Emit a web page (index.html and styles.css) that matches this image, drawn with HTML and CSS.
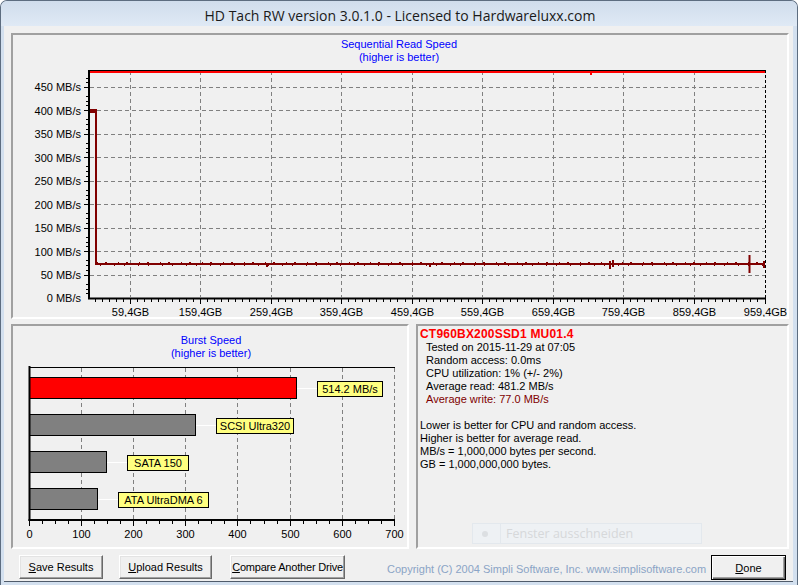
FILE: index.html
```html
<!DOCTYPE html>
<html>
<head>
<meta charset="utf-8">
<title>HD Tach RW</title>
<link rel="stylesheet" href="styles.css">
</head>
<body>
<div class="window">
  <div class="titlebar">HD Tach RW version 3.0.1.0 - Licensed to Hardwareluxx.com</div>
  <div class="client">
    <div class="panel seq">
      <svg class="chart" width="774" height="282" viewBox="13 35 774 282">
        <text class="ttl" x="399" y="48" text-anchor="middle">Sequential Read Speed</text>
        <text class="ttl" x="399" y="61" text-anchor="middle">(higher is better)</text>
        <g class="grid">
          <line x1="90" y1="87.5" x2="765" y2="87.5"/>
          <line x1="90" y1="110.5" x2="765" y2="110.5"/>
          <line x1="90" y1="134.5" x2="765" y2="134.5"/>
          <line x1="90" y1="157.5" x2="765" y2="157.5"/>
          <line x1="90" y1="181.5" x2="765" y2="181.5"/>
          <line x1="90" y1="204.5" x2="765" y2="204.5"/>
          <line x1="90" y1="228.5" x2="765" y2="228.5"/>
          <line x1="90" y1="251.5" x2="765" y2="251.5"/>
          <line x1="90" y1="275.5" x2="765" y2="275.5"/>
          <line x1="130.5" y1="71" x2="130.5" y2="297"/>
          <line x1="200.5" y1="71" x2="200.5" y2="297"/>
          <line x1="271.5" y1="71" x2="271.5" y2="297"/>
          <line x1="341.5" y1="71" x2="341.5" y2="297"/>
          <line x1="412.5" y1="71" x2="412.5" y2="297"/>
          <line x1="482.5" y1="71" x2="482.5" y2="297"/>
          <line x1="553.5" y1="71" x2="553.5" y2="297"/>
          <line x1="623.5" y1="71" x2="623.5" y2="297"/>
          <line x1="694.5" y1="71" x2="694.5" y2="297"/>
        </g>
        <line class="edge" x1="765.5" y1="70" x2="765.5" y2="298"/>
        <line class="axis1" x1="88" y1="70.5" x2="766" y2="70.5"/>
        <path class="tick" d="M84 87.5H88M84 110.5H88M84 134.5H88M84 157.5H88M84 181.5H88M84 204.5H88M84 228.5H88M84 251.5H88M84 275.5H88
          M86 96.5H88M86 101.5H88M86 105.5H88M86 119.5H88M86 124.5H88M86 129.5H88M86 143.5H88M86 148.5H88M86 152.5H88M86 166.5H88M86 171.5H88M86 176.5H88
          M86 190.5H88M86 195.5H88M86 199.5H88M86 213.5H88M86 218.5H88M86 223.5H88M86 237.5H88M86 242.5H88M86 246.5H88M86 260.5H88M86 265.5H88M86 270.5H88
          M86 284.5H88M86 289.5H88M86 293.5H88M86 78.5H88M86 82.5H88"/>
        <path class="tick" d="M95.5 299V302M102.5 299V302M109.5 299V302M116.5 299V302M123.5 299V302M130.5 299V304M137.5 299V302M144.5 299V302M151.5 299V302M158.5 299V302M165.5 299V302M172.5 299V302M179.5 299V302M186.5 299V302M193.5 299V302M200.5 299V304M207.5 299V302M214.5 299V302M221.5 299V302M228.5 299V302M235.5 299V302M242.5 299V302M249.5 299V302M256.5 299V302M264.5 299V302M271.5 299V304M278.5 299V302M285.5 299V302M292.5 299V302M299.5 299V302M306.5 299V302M313.5 299V302M320.5 299V302M327.5 299V302M334.5 299V302M341.5 299V304M348.5 299V302M355.5 299V302M362.5 299V302M369.5 299V302M376.5 299V302M383.5 299V302M390.5 299V302M397.5 299V302M405.5 299V302M412.5 299V304M419.5 299V302M426.5 299V302M433.5 299V302M440.5 299V302M447.5 299V302M454.5 299V302M461.5 299V302M468.5 299V302M475.5 299V302M482.5 299V304M489.5 299V302M496.5 299V302M503.5 299V302M510.5 299V302M517.5 299V302M524.5 299V302M531.5 299V302M538.5 299V302M546.5 299V302M553.5 299V304M560.5 299V302M567.5 299V302M574.5 299V302M581.5 299V302M588.5 299V302M595.5 299V302M602.5 299V302M609.5 299V302M616.5 299V302M623.5 299V304M630.5 299V302M637.5 299V302M644.5 299V302M651.5 299V302M658.5 299V302M665.5 299V302M672.5 299V302M679.5 299V302M687.5 299V302M694.5 299V304M701.5 299V302M708.5 299V302M715.5 299V302M722.5 299V302M729.5 299V302M736.5 299V302M743.5 299V302M750.5 299V302M757.5 299V302M765.5 299V304"/>
        <line class="read" x1="90" y1="72" x2="765" y2="72"/>
        <rect class="readfill" x="590" y="72" width="2" height="3"/>
        <path class="write" d="M89 111H96V264H765"/>
        <rect class="writefill" x="89" y="109" width="8" height="4"/>
        <line class="jit" x1="97" y1="262.5" x2="765" y2="262.5"/>
        <line class="jit2" x1="100" y1="265.5" x2="765" y2="265.5"/>
        <path class="spike" d="M610 261V269M613 260V267M749.5 255V273M764 261V268M267 263V267M430 263V267"/>
        <line class="axis2" x1="89" y1="70" x2="89" y2="299"/>
        <line class="axis2" x1="88" y1="298.5" x2="766" y2="298.5"/>
        <g class="lbl" text-anchor="end">
          <text x="81" y="91">450 MB/s</text>
          <text x="81" y="114.5">400 MB/s</text>
          <text x="81" y="138">350 MB/s</text>
          <text x="81" y="161.5">300 MB/s</text>
          <text x="81" y="185">250 MB/s</text>
          <text x="81" y="208.5">200 MB/s</text>
          <text x="81" y="232">150 MB/s</text>
          <text x="81" y="255.5">100 MB/s</text>
          <text x="81" y="279">50 MB/s</text>
          <text x="81" y="302">0 MB/s</text>
        </g>
        <g class="lbl" text-anchor="middle">
          <text x="130.5" y="316">59,4GB</text>
          <text x="200.5" y="316">159,4GB</text>
          <text x="271.5" y="316">259,4GB</text>
          <text x="341.5" y="316">359,4GB</text>
          <text x="412.5" y="316">459,4GB</text>
          <text x="482.5" y="316">559,4GB</text>
          <text x="553.5" y="316">659,4GB</text>
          <text x="623.5" y="316">759,4GB</text>
          <text x="694.5" y="316">859,4GB</text>
          <text x="765.5" y="316">959,4GB</text>
        </g>
      </svg>
    </div>
    <div class="middle">
      <div class="panel burst">
        <svg class="chart" width="394" height="221" viewBox="13 326 394 221">
          <text class="ttl" x="211" y="344" text-anchor="middle">Burst Speed</text>
          <text class="ttl" x="211" y="357" text-anchor="middle">(higher is better)</text>
          <g class="grid">
            <line x1="81.5" y1="368" x2="81.5" y2="519"/>
            <line x1="133.5" y1="368" x2="133.5" y2="519"/>
            <line x1="185.5" y1="368" x2="185.5" y2="519"/>
            <line x1="237.5" y1="368" x2="237.5" y2="519"/>
            <line x1="290.5" y1="368" x2="290.5" y2="519"/>
            <line x1="342.5" y1="368" x2="342.5" y2="519"/>
            <line x1="394.5" y1="368" x2="394.5" y2="519"/>
          </g>
          <line class="axis1" x1="29" y1="367.5" x2="395" y2="367.5"/>
          <path class="tick" d="M42.5 521V524M55.5 521V524M68.5 521V524M81.5 521V526M94.5 521V524M107.5 521V524M120.5 521V524M133.5 521V526M146.5 521V524M159.5 521V524M172.5 521V524M185.5 521V526M198.5 521V524M211.5 521V524M224.5 521V524M237.5 521V526M250.5 521V524M264.5 521V524M277.5 521V524M290.5 521V526M303.5 521V524M316.5 521V524M329.5 521V524M342.5 521V526M355.5 521V524M368.5 521V524M381.5 521V524M394.5 521V526M29.5 521V526"/>
          <g class="conn">
            <line x1="297" y1="388.5" x2="317" y2="388.5"/>
            <line x1="196" y1="425.5" x2="216" y2="425.5"/>
            <line x1="107" y1="462.5" x2="127" y2="462.5"/>
            <line x1="98" y1="499.5" x2="118" y2="499.5"/>
          </g>
          <rect class="bar red" x="29.5" y="377.5" width="267" height="21"/>
          <rect class="bar gray" x="29.5" y="414.5" width="166" height="21"/>
          <rect class="bar gray" x="29.5" y="451.5" width="77" height="21"/>
          <rect class="bar gray" x="29.5" y="488.5" width="68" height="21"/>
          <rect class="tag" x="317.5" y="381.5" width="65" height="15"/>
          <rect class="tag" x="216.5" y="418.5" width="77" height="15"/>
          <rect class="tag" x="127.5" y="455.5" width="61" height="15"/>
          <rect class="tag" x="118.5" y="492.5" width="90" height="15"/>
          <g class="lbl" text-anchor="middle">
            <text x="350" y="393">514.2 MB/s</text>
            <text x="255" y="430">SCSI Ultra320</text>
            <text x="158" y="467">SATA 150</text>
            <text x="163.5" y="504">ATA UltraDMA 6</text>
          </g>
          <line class="axis2" x1="29.5" y1="366" x2="29.5" y2="521"/>
          <line class="axis2" x1="28.5" y1="520" x2="395" y2="520"/>
          <g class="lbl" text-anchor="middle">
            <text x="29.5" y="538">0</text>
            <text x="81.5" y="538">100</text>
            <text x="133.5" y="538">200</text>
            <text x="185.5" y="538">300</text>
            <text x="237.5" y="538">400</text>
            <text x="290.5" y="538">500</text>
            <text x="342.5" y="538">600</text>
            <text x="394.5" y="538">700</text>
          </g>
        </svg>
      </div>
      <div class="panel info">
        <div class="drive">CT960BX200SSD1 MU01.4</div>
        <div class="ind">Tested on 2015-11-29 at 07:05</div>
        <div class="ind">Random access: 0.0ms</div>
        <div class="ind">CPU utilization: 1% (+/- 2%)</div>
        <div class="ind">Average read: 481.2 MB/s</div>
        <div class="ind write-txt">Average write: 77.0 MB/s</div>
        <div class="blank"></div>
        <div>Lower is better for CPU and random access.</div>
        <div>Higher is better for average read.</div>
        <div>MB/s = 1,000,000 bytes per second.</div>
        <div>GB = 1,000,000,000 bytes.</div>
      </div>
    </div>
    <div class="bottom">
      <button class="btn save"><u>S</u>ave Results</button>
      <button class="btn upload"><u>U</u>pload Results</button>
      <button class="btn compare"><u>C</u>ompare Another Drive</button>
      <span class="copyright">Copyright (C) 2004 Simpli Software, Inc. www.simplisoftware.com</span>
      <button class="btn done"><u>D</u>one</button>
    </div>
  </div>
  <div class="ghost"><span class="ghost-dot"></span><span class="ghost-text">Fenster ausschneiden</span></div>
</div>
</body>
</html>
```

FILE: styles.css
```css
html, body {
  margin: 0;
  padding: 0;
  background: #ffffff;
}
.window {
  position: relative;
  width: 798px;
  height: 585px;
  box-sizing: border-box;
  background: #d3e0ef;
  border: 1px solid #5d6d80;
  border-bottom: none;
  border-radius: 7px 7px 0 0;
  padding: 0 4px 0 3px;
  display: flex;
  flex-direction: column;
  font-family: "Liberation Sans", Arial, sans-serif;
  font-size: 11px;
  color: #000;
}
.titlebar {
  height: 25px;
  margin: 0 -4px 0 -3px;
  border-radius: 6px 6px 0 0;
  background: linear-gradient(#d0ddec, #dfe9f5);
  font-family: "Open Sans", "Noto Sans", sans-serif;
  font-size: 14px;
  color: #1a1a1a;
  text-align: center;
  line-height: 29px;
  padding-left: 2px;
}
.client {
  height: 556px;
  box-sizing: border-box;
  background: #f0f0f0;
  border-bottom: 1px solid #4f5b6b;
  padding: 7px 0 0 7px;
  display: flex;
  flex-direction: column;
}
.panel {
  box-sizing: border-box;
  border: 2px solid;
  border-color: #a0a0a0 #ffffff #ffffff #a0a0a0;
  background: #f0f0f0;
  overflow: hidden;
}
.seq {
  width: 778px;
  height: 286px;
}
.chart {
  display: block;
}
.ttl {
  font-family: "Liberation Sans", Arial, sans-serif;
  font-size: 11px;
  fill: #0000ff;
}
.lbl {
  font-family: "Liberation Sans", Arial, sans-serif;
  font-size: 11px;
  fill: #000;
}
.grid line {
  stroke: #808080;
  stroke-width: 1;
  stroke-dasharray: 4 3;
}
.edge {
  stroke: #000;
  stroke-width: 1;
  stroke-dasharray: 3 2;
}
.axis1 {
  stroke: #000;
  stroke-width: 1;
}
.axis2 {
  stroke: #000;
  stroke-width: 2;
}
.tick {
  stroke: #000;
  stroke-width: 1;
  fill: none;
}
.read {
  stroke: #ff0000;
  stroke-width: 2;
}
.readfill {
  fill: #ff0000;
}
.write {
  fill: none;
  stroke: #800000;
  stroke-width: 2;
}
.writefill {
  fill: #800000;
}
.jit {
  stroke: #800000;
  stroke-width: 1;
  stroke-dasharray: 1 7 2 11;
}
.jit2 {
  stroke: #800000;
  stroke-width: 1;
  stroke-dasharray: 1 13 1 9;
}
.spike {
  stroke: #800000;
  stroke-width: 2;
  fill: none;
}
.conn line {
  stroke: #ffffff;
  stroke-width: 1;
}
.bar {
  stroke: #000;
  stroke-width: 1;
}
.bar.red {
  fill: #ff0000;
}
.bar.gray {
  fill: #808080;
}
.tag {
  fill: #ffff80;
  stroke: #000;
  stroke-width: 1;
}
.middle {
  display: flex;
  gap: 7px;
  margin-top: 5px;
  height: 225px;
}
.burst {
  width: 398px;
  height: 225px;
}
.info {
  width: 373px;
  height: 225px;
  padding: 2px 0 0 2px;
  line-height: 13px;
  white-space: nowrap;
}
.drive {
  color: #ff0000;
  font-weight: bold;
  font-size: 12px;
  letter-spacing: 0.2px;
}
.ind {
  padding-left: 6px;
}
.write-txt {
  color: #800000;
}
.blank {
  height: 13px;
}
.bottom {
  display: flex;
  align-items: flex-start;
  margin-top: 6px;
  height: 25px;
}
.btn {
  box-sizing: border-box;
  height: 24px;
  padding: 0;
  white-space: nowrap;
  background: #f0f0f0;
  border: 1px solid;
  border-color: #ffffff #696969 #696969 #ffffff;
  box-shadow: inset -1px -1px #a0a0a0, inset 1px 1px #e3e3e3;
  font-family: "Liberation Sans", Arial, sans-serif;
  font-size: 11px;
  color: #000;
}
.save {
  width: 84px;
  margin-left: 8px;
}
.upload {
  width: 93px;
  margin-left: 16px;
}
.compare {
  width: 115px;
  margin-left: 18px;
  letter-spacing: -0.2px;
}
.copyright {
  margin-left: 42px;
  width: 324px;
  white-space: nowrap;
  line-height: 28px;
  color: #8ba4c6;
  font-size: 11px;
}
.done {
  width: 75px;
  height: 25px;
  border: 1px solid #000;
  box-shadow: inset 1px 1px #ffffff, inset -1px -1px #696969, inset -2px -2px #a0a0a0;
}
.ghost {
  position: absolute;
  left: 471px;
  top: 522px;
  width: 230px;
  height: 21px;
  box-sizing: border-box;
  border: 1px solid #e3e8ed;
  background: #eef1f4;
  display: flex;
  align-items: center;
}
.ghost-dot {
  width: 27px;
  height: 19px;
  border-right: 1px solid #e3e8ed;
  position: relative;
}
.ghost-dot::after {
  content: "";
  position: absolute;
  left: 9px;
  top: 7px;
  width: 6px;
  height: 6px;
  border-radius: 50%;
  background: #dcdfe2;
}
.ghost-text {
  margin-left: 5px;
  font-family: "Open Sans", "Noto Sans", sans-serif;
  font-size: 12.5px;
  color: #d6d8da;
}
```
